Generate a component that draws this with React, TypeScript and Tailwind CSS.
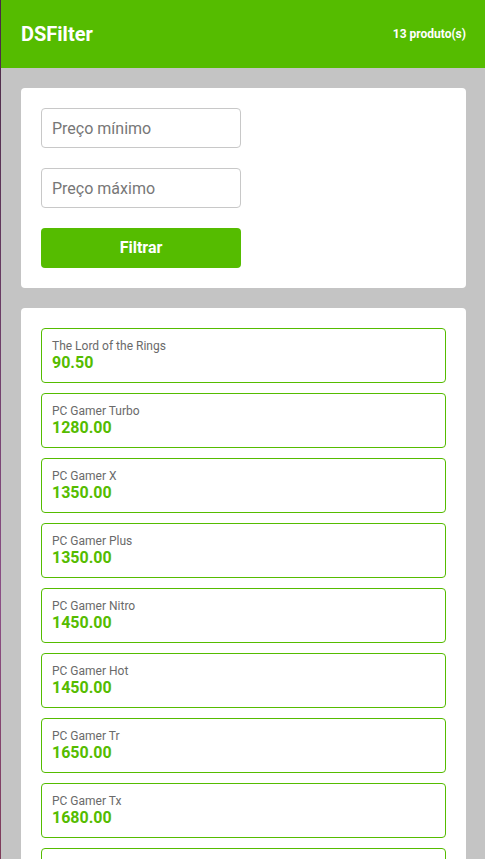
const products = [
  { name: "The Lord of the Rings", price: 90.5 },
  { name: "PC Gamer Turbo", price: 1280.0 },
  { name: "PC Gamer X", price: 1350.0 },
  { name: "PC Gamer Plus", price: 1350.0 },
  { name: "PC Gamer Nitro", price: 1450.0 },
  { name: "PC Gamer Hot", price: 1450.0 },
  { name: "PC Gamer Tr", price: 1650.0 },
  { name: "PC Gamer Tx", price: 1680.0 },
  { name: "PC Gamer Y", price: 1700.0 },
  { name: "PC Gamer Alfa", price: 1850.0 },
  { name: "PC Gamer Tera", price: 1950.0 },
  { name: "PC Gamer Max", price: 2099.0 },
  { name: "Smart TV", price: 2190.0 },
];

const App = () => {
  return (
    <div className="flex min-h-[859px] bg-[#c4c4c4] font-['Roboto',sans-serif]">
      {/* thin desktop edge */}
      <div className="w-px shrink-0 bg-gradient-to-b from-[#4a2a45] via-[#8c4f86] to-[#6a1c1c]" />
      <div className="flex-1">
        <header className="h-[68px] bg-[#55bc00] flex items-center justify-between pl-5 pr-[19px]">
          <h1 className="text-white font-bold text-xl">DSFilter</h1>
          <span className="text-white font-bold text-xs">
            {products.length} produto(s)
          </span>
        </header>

        <main className="pl-5 pr-[19px] py-5 flex flex-col gap-5">
          <section className="bg-white rounded p-5 flex flex-col gap-5">
            <input
              type="text"
              placeholder="Preço mínimo"
              className="w-[200px] h-10 border border-[#c8c8c8] rounded px-[10px] text-base text-[#555] placeholder:text-[#777] outline-none"
            />
            <input
              type="text"
              placeholder="Preço máximo"
              className="w-[200px] h-10 border border-[#c8c8c8] rounded px-[10px] text-base text-[#555] placeholder:text-[#777] outline-none"
            />
            <button className="w-[200px] h-10 bg-[#55bc00] rounded text-white font-bold text-base">
              Filtrar
            </button>
          </section>

          <section className="bg-white rounded p-5 flex flex-col gap-[10px]">
            {products.map((item, index) => (
              <div
                key={index}
                className="border border-[#55bc00] rounded px-[10px] py-[10px]"
              >
                <p className="text-xs leading-[15px] text-[#6a6a6a]">{item.name}</p>
                <p className="text-base leading-[18px] font-bold text-[#55bc00]">
                  {item.price.toFixed(2)}
                </p>
              </div>
            ))}
          </section>
        </main>
      </div>
    </div>
  );
};

export default App;
